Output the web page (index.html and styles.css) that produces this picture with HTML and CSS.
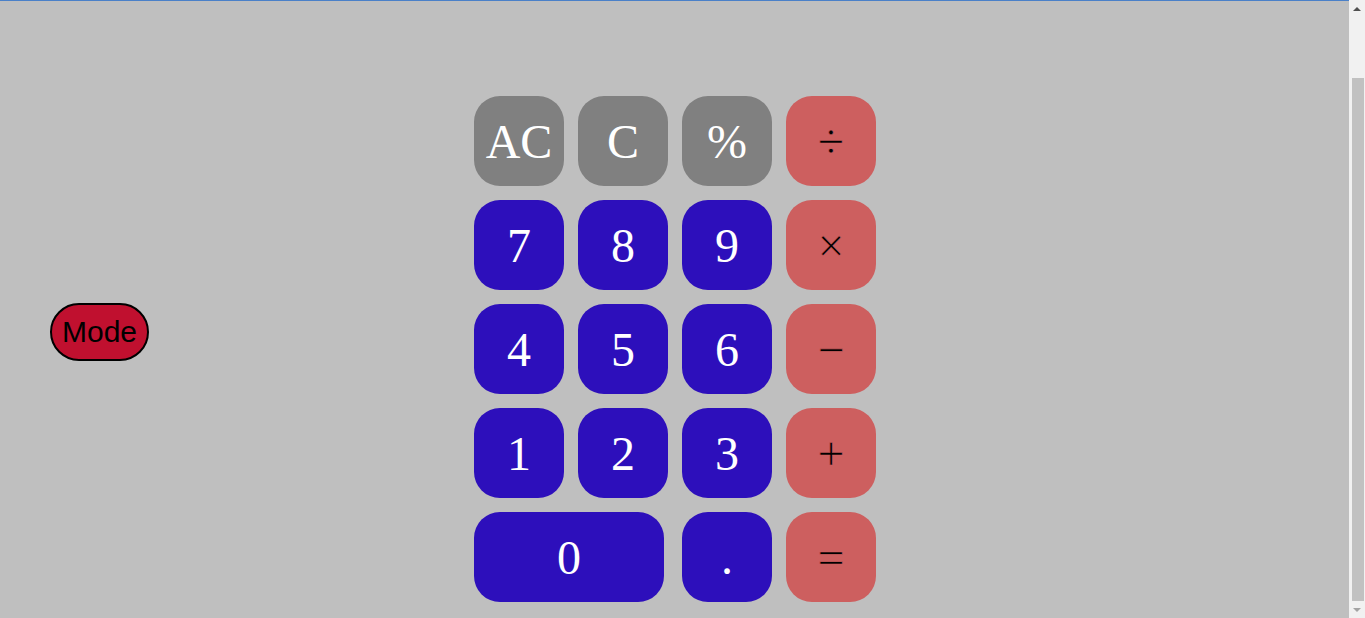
FILE: index.html
```html
<!DOCTYPE html>
<html lang="en">
<head>
<meta charset="utf-8">
<title>Calculator</title>
<link rel="stylesheet" href="styles.css">
</head>
<body>
<div class="page">
  <div class="display"></div>
  <main class="main">
    <div class="side">
      <button class="mode">Mode</button>
    </div>
    <div class="keypad">
      <button class="key fn">AC</button>
      <button class="key fn">C</button>
      <button class="key fn">%</button>
      <button class="key op">÷</button>
      <button class="key num">7</button>
      <button class="key num">8</button>
      <button class="key num">9</button>
      <button class="key op">×</button>
      <button class="key num">4</button>
      <button class="key num">5</button>
      <button class="key num">6</button>
      <button class="key op">−</button>
      <button class="key num">1</button>
      <button class="key num">2</button>
      <button class="key num">3</button>
      <button class="key op">+</button>
      <button class="key num zero">0</button>
      <button class="key num">.</button>
      <button class="key op">=</button>
    </div>
    <div class="side"></div>
  </main>
</div>
<div class="scrollbar">
  <span class="arrow up"></span>
  <span class="track"><span class="thumb"></span></span>
  <span class="arrow down"></span>
</div>
</body>
</html>
```
FILE: styles.css
```css
html, body {
  margin: 0;
  padding: 0;
  background: #bfbfbf;
  height: 618px;
  overflow: hidden;
}
.page {
  margin-right: 15px;
}
.display {
  height: 0;
  border-bottom: 1px solid #4a80c8;
}
.main {
  display: grid;
  grid-template-columns: 1fr auto 1fr;
  padding: 95px 0 16px;
}
.side {
  display: flex;
  align-items: flex-start;
}
.mode {
  margin: 207px 0 0 50px;
  width: 99px;
  height: 58px;
  padding: 0;
  border: 2px solid #000;
  border-radius: 29px;
  background: #c0102f;
  color: #000;
  font-family: "Liberation Sans", Arial, sans-serif;
  font-size: 30px;
}
.keypad {
  display: grid;
  grid-template-columns: repeat(4, 90px);
  grid-auto-rows: 90px;
  gap: 14px;
}
.key {
  border: none;
  border-radius: 26px;
  padding: 0;
  margin: 0;
  font-family: "Liberation Serif", "Times New Roman", serif;
  font-size: 48px;
  color: #fff;
  display: flex;
  align-items: center;
  justify-content: center;
}
.fn { background: #808080; }
.num { background: #2d0fbb; }
.op {
  background: #cd5f5f;
  color: #000;
  -webkit-text-stroke: 0.6px #cd5f5f;
}
.zero {
  grid-column: span 2;
  width: 190px;
  justify-self: start;
}

.scrollbar {
  position: fixed;
  top: 0;
  right: 0;
  bottom: 0;
  width: 16px;
  background: #f1f1f1;
  display: flex;
  flex-direction: column;
  align-items: center;
}
.arrow {
  height: 17px;
  width: 100%;
  display: flex;
  align-items: center;
  justify-content: center;
  flex: none;
}
.arrow::before {
  content: "";
  width: 0;
  height: 0;
  border-left: 4px solid transparent;
  border-right: 4px solid transparent;
}
.up::before { border-bottom: 4px solid #505050; }
.down::before { border-top: 4px solid #a3a3a3; }
.track {
  flex: 1;
  width: 100%;
  display: flex;
  flex-direction: column;
  justify-content: flex-end;
  align-items: center;
  padding-top: 61px;
}
.thumb {
  width: 12px;
  flex: 1;
  margin-left: 1px;
  background: #c1c1c1;
}
```
